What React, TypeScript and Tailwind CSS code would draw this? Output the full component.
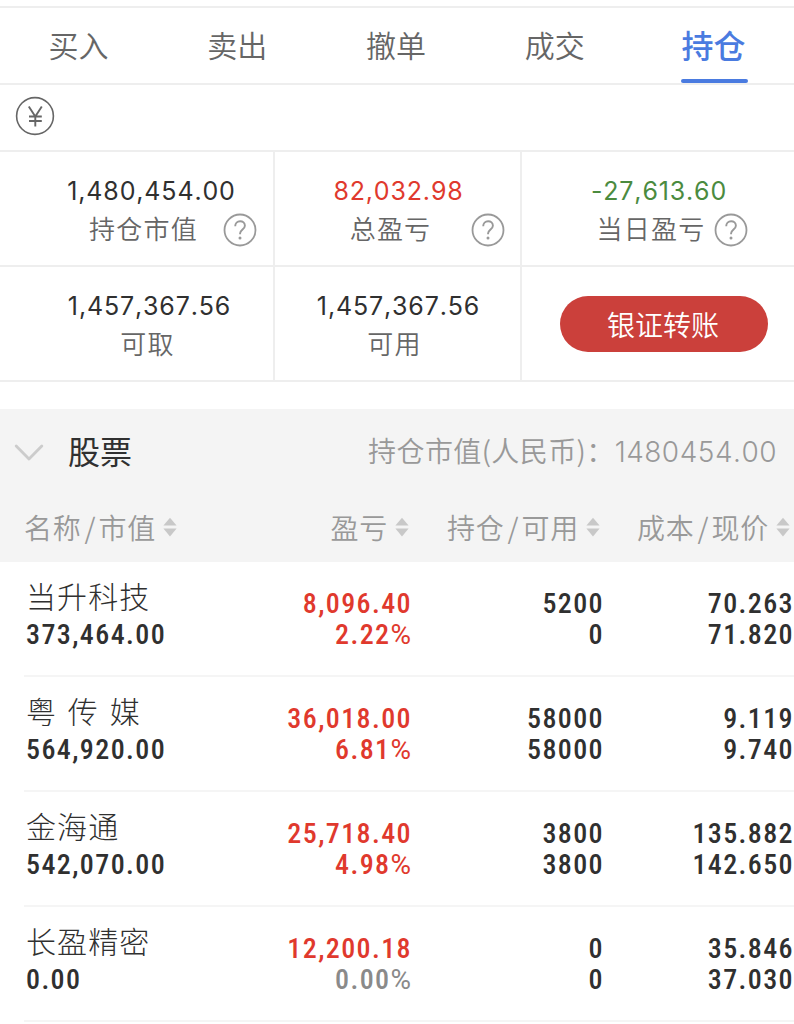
import clsx from 'clsx';

const tabs = ['买入', '卖出', '撤单', '成交', '持仓'];

type Holding = {
  name: string;
  value: string;
  profit: string;
  percent: string;
  flat?: boolean;
  amount: string;
  available: string;
  cost: string;
  price: string;
};

const holdings: Holding[] = [
  { name: '当升科技', value: '373,464.00', profit: '8,096.40', percent: '2.22', amount: '5200', available: '0', cost: '70.263', price: '71.820' },
  { name: '粤 传 媒', value: '564,920.00', profit: '36,018.00', percent: '6.81', amount: '58000', available: '58000', cost: '9.119', price: '9.740' },
  { name: '金海通', value: '542,070.00', profit: '25,718.40', percent: '4.98', amount: '3800', available: '3800', cost: '135.882', price: '142.650' },
  { name: '长盈精密', value: '0.00', profit: '12,200.18', percent: '0.00', flat: true, amount: '0', available: '0', cost: '35.846', price: '37.030' },
];

function HelpIcon({ className }: { className?: string }) {
  return (
    <svg viewBox="0 0 34 34" className={clsx('size-[34px] shrink-0', className)} fill="none" stroke="#999999">
      <circle cx="17" cy="17" r="15.5" strokeWidth="1.8" />
      <path d="M12.2 13.2c0-3 2.1-4.9 4.9-4.9s4.8 1.8 4.8 4.4c0 3.4-4.8 4.1-4.8 7.6v1" strokeWidth="1.9" />
      <circle cx="17" cy="24.9" r="1.5" fill="#999999" stroke="none" />
    </svg>
  );
}

function YuanIcon() {
  return (
    <svg viewBox="0 0 40 40" className="size-10" fill="none" stroke="#666666">
      <circle cx="20" cy="20" r="18.4" strokeWidth="1.6" />
      <path d="M13.8 10.5 20.3 20.5 26.8 10.5M20.3 20.5v10M14 20.5h12.8M14 25h12.8" strokeWidth="1.9" />
    </svg>
  );
}

function SortIcon() {
  return (
    <svg viewBox="0 0 14 20" className="mb-[3px] h-5 w-3.5 shrink-0" fill="#c8c8c8">
      <path d="M7 0.8 13.6 8.6H0.4z" />
      <path d="M7 19.4 13.6 11.6H0.4z" />
    </svg>
  );
}

function Stat({ value, label, color = 'text-[#303030]', className, labelClass, help }: {
  value: string;
  label: string;
  color?: string;
  className?: string;
  labelClass?: string;
  help?: string;
}) {
  return (
    <div className={clsx('pt-[19px]', className)}>
      <div className={clsx('h-[39px] pl-0.5 font-[Inter,sans-serif] text-[25px] leading-10 tracking-[0.85px] [font-kerning:none]', color)}>{value}</div>
      <div className="relative flex h-10 items-center justify-center text-[26px] leading-9 font-[350] tracking-[1.2px] text-[#666666]">
        <span className={clsx('pb-1', labelClass)}>{label}</span>
        {help && <HelpIcon className={clsx('absolute', help)} />}
      </div>
    </div>
  );
}

function ColumnTitle({ children, className }: { children: string; className?: string }) {
  const [first, second] = children.split('/');
  return (
    <div className={clsx('flex items-center gap-[7px]', className)}>
      <span className="-mt-1 text-[28px] leading-10 font-[350] tracking-[0.8px] whitespace-nowrap">
        {first}
        {second && <span className="mr-[2px] ml-[3px]">/</span>}
        {second}
      </span>
      <SortIcon />
    </div>
  );
}

function HoldingRow({ item }: { item: Holding }) {
  const numbers = 'flex flex-col items-end pt-[26px]';
  const digits = 'font-[Roboto,sans-serif] text-[28px] leading-[31px] font-medium tracking-[1.4px] [font-stretch:85%]';
  return (
    <div className="relative grid h-[115px] grid-cols-[244px_168px_192px_190px] text-[#303030]">
      <div className="pt-3 pl-[26px]">
        <div className="h-[45px] text-[30px] leading-[42px] font-light tracking-[1.1px] [word-spacing:3px] whitespace-pre">{item.name}</div>
        <div className={digits}>{item.value}</div>
      </div>
      <div className={clsx(numbers, digits, 'text-[#e0392d]')}>
        <span>{item.profit}</span>
        <span className={clsx(item.flat && 'text-[#8a8a8a]')}>
          {item.percent}
          <span className="font-normal tracking-[1px] [font-stretch:100%]">%</span>
        </span>
      </div>
      <div className={clsx(numbers, digits)}>
        <span>{item.amount}</span>
        <span>{item.available}</span>
      </div>
      <div className={clsx(numbers, digits)}>
        <span>{item.cost}</span>
        <span>{item.price}</span>
      </div>
      <div className="absolute right-0 bottom-0 left-6 h-0.5 bg-[#f5f5f5]" />
    </div>
  );
}

export default function App() {
  return (
    <div className="h-[1024px] w-[794px] overflow-hidden bg-white font-['Noto_Sans_CJK_SC',sans-serif]">
      <nav className="mt-1.5 grid h-[79px] grid-cols-5 border-y-2 border-[#eeeeee]">
        {tabs.map((tab) => {
          const active = tab === '持仓';
          return (
            <div key={tab} className="flex flex-col items-center">
              <span
                className={clsx(
                  'h-[71px] pr-0.5 leading-[72px]',
                  active ? 'text-[32px] font-medium text-[#4a7be0]' : 'text-[30px] font-[350] text-[#666666]',
                )}
              >
                {tab}
              </span>
              {active && <span className="h-1 w-[67px] rounded-full bg-[#4a7be0]" />}
            </div>
          );
        })}
      </nav>

      <div className="flex h-[65px] items-center pb-1 pl-[15px]">
        <YuanIcon />
      </div>

      <section className="grid h-[232px] grid-cols-[275px_247px_272px] grid-rows-[115px_115px] border-t-2 border-[#eeeeee] text-center">
        <Stat value="1,480,454.00" label="持仓市值" className="border-r-2 border-b-2 border-[#eeeeee] pl-7" labelClass="pr-3.5" help="right-4" />
        <Stat value="82,032.98" label="总盈亏" color="text-[#e0392d]" className="border-r-2 border-b-2 border-[#eeeeee]" labelClass="pr-3.5" help="right-[15px]" />
        <Stat value="-27,613.60" label="当日盈亏" color="text-[#4b8b3f]" className="border-b-2 border-[#eeeeee]" labelClass="pr-3.5" help="right-[46px]" />
        <Stat value="1,457,367.56" label="可取" className="border-r-2 border-b-2 border-[#eeeeee] pl-6" labelClass="pr-0.5" />
        <Stat value="1,457,367.56" label="可用" className="border-r-2 border-b-2 border-[#eeeeee]" labelClass="pr-1.5" />
        <div className="flex items-center justify-center border-b-2 border-[#eeeeee] pl-3">
          <button className="h-14 w-[208px] rounded-full bg-[#cb403b] pr-0.5 text-[28px] leading-[54px] font-[350] text-white">银证转账</button>
        </div>
      </section>

      <section className="mt-[27px] h-[153px] bg-[#f4f4f4] text-[#999999]">
        <div className="flex h-[86px] items-center pr-[17px] pl-[14px]">
          <svg viewBox="0 0 30 18" className="mt-0.5 h-[18px] w-[30px]" fill="none" stroke="#cccccc" strokeWidth="2.8" strokeLinecap="round" strokeLinejoin="round">
            <path d="M2.2 2 15 15 27.8 2" />
          </svg>
          <h2 className="mb-1 ml-6 text-[32px] text-[#303030]">股票</h2>
          <div className="ml-auto flex items-center">
            <span className="mb-1 text-[28px] font-[350] tracking-[0.4px]">持仓市值(人民币)：</span>
            <span className="font-[Inter,sans-serif] text-[28px] font-[350] tracking-[0.5px] [font-kerning:none]">1480454.00</span>
          </div>
        </div>
        <div className="grid h-[67px] grid-cols-[244px_165px_191px_190px] items-center">
          <ColumnTitle className="pl-6">名称/市值</ColumnTitle>
          <ColumnTitle className="justify-end">盈亏</ColumnTitle>
          <ColumnTitle className="justify-end">持仓/可用</ColumnTitle>
          <ColumnTitle className="justify-end">成本/现价</ColumnTitle>
        </div>
      </section>

      <section>
        {holdings.map((item) => (
          <HoldingRow key={item.name} item={item} />
        ))}
      </section>
    </div>
  );
}
